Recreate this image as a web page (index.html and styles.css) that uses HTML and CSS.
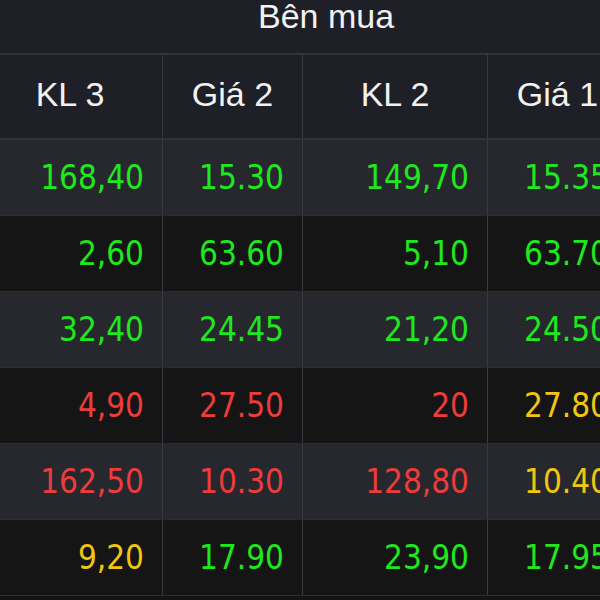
FILE: index.html
```html
<!DOCTYPE html>
<html lang="vi">
<head>
<meta charset="utf-8">
<title>Bên mua</title>
<link rel="stylesheet" href="styles.css">
</head>
<body>
<div class="board">
  <div class="group">Bên mua</div>
  <div class="row head">
    <div class="cell">KL 3</div>
    <div class="cell">Giá 2</div>
    <div class="cell">KL 2</div>
    <div class="cell">Giá 1</div>
  </div>
  <div class="row light">
    <div class="cell up">168,40</div>
    <div class="cell up">15.30</div>
    <div class="cell up">149,70</div>
    <div class="cell up">15.35</div>
  </div>
  <div class="row dark">
    <div class="cell up">2,60</div>
    <div class="cell up">63.60</div>
    <div class="cell up">5,10</div>
    <div class="cell up">63.70</div>
  </div>
  <div class="row light">
    <div class="cell up">32,40</div>
    <div class="cell up">24.45</div>
    <div class="cell up">21,20</div>
    <div class="cell up">24.50</div>
  </div>
  <div class="row dark">
    <div class="cell down">4,90</div>
    <div class="cell down">27.50</div>
    <div class="cell down">20</div>
    <div class="cell ref">27.80</div>
  </div>
  <div class="row light">
    <div class="cell down">162,50</div>
    <div class="cell down">10.30</div>
    <div class="cell down">128,80</div>
    <div class="cell ref">10.40</div>
  </div>
  <div class="row dark">
    <div class="cell ref">9,20</div>
    <div class="cell up">17.90</div>
    <div class="cell up">23,90</div>
    <div class="cell up">17.95</div>
  </div>
</div>
</body>
</html>
```

FILE: styles.css
```css
html, body {
  margin: 0;
  padding: 0;
  background: #141414;
  overflow: hidden;
}
.board {
  width: 650px;
  margin-left: -22px;
  background: #1f2027;
}
.group {
  height: 55px;
  box-sizing: border-box;
  padding-left: 280px;
  font-family: "Liberation Sans", Arial, sans-serif;
  font-size: 34px;
  line-height: 32px;
  color: #f2f2f2;
  border-bottom: 2px solid #33343b;
}
.row {
  display: grid;
  grid-template-columns: 185px 140px 185px 140px;
  height: 76px;
  box-sizing: border-box;
  border-bottom: 1px solid #2c2d33;
}
.cell {
  display: flex;
  align-items: center;
  justify-content: flex-end;
  padding-right: 18px;
  border-right: 1px solid #3a3b42;
  font-family: "DejaVu Sans Condensed", "DejaVu Sans", sans-serif;
  font-stretch: condensed;
  font-size: 33px;
}
.head {
  height: 85px;
  background: #1f2027;
  border-bottom: 2px solid #33343b;
}
.head .cell {
  justify-content: center;
  padding-right: 0;
  font-family: "Liberation Sans", Arial, sans-serif;
  font-stretch: normal;
  font-size: 34px;
  color: #f2f2f2;
  padding-bottom: 4px;
}
.light { background: #27282e; }
.dark { background: #151515; }
.up { color: #1ee81e; }
.down { color: #ec3c3c; }
.ref { color: #f1c512; }
```
